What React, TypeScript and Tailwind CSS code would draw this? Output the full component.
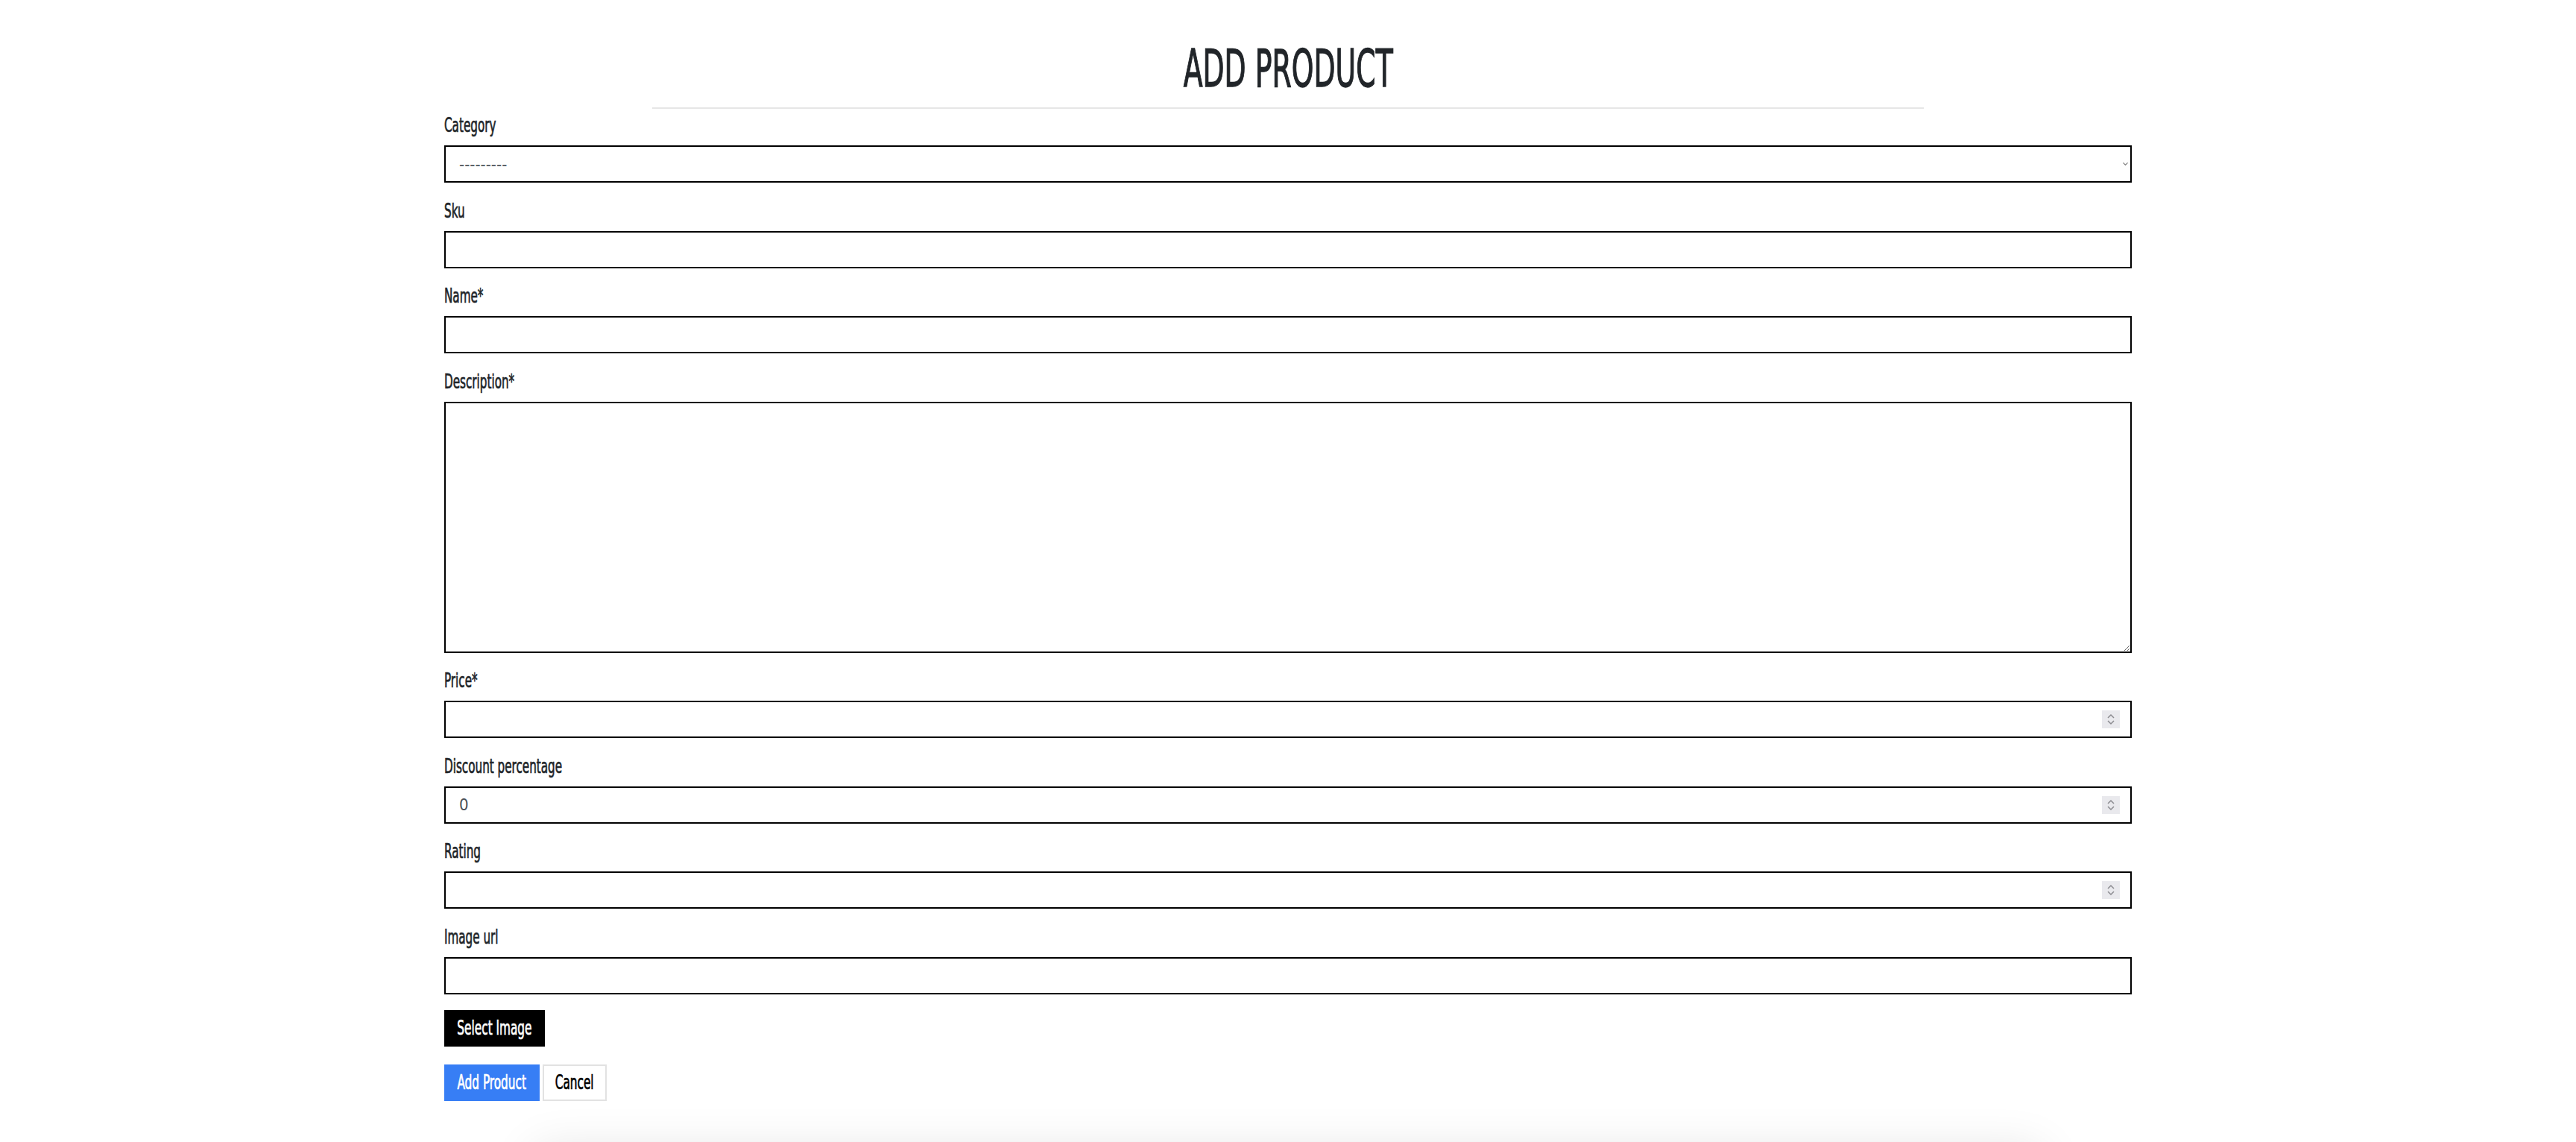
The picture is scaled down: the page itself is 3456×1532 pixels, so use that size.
import { ChevronDown } from 'lucide-react'

// Oswald is not installed: DejaVu Sans Condensed, squeezed sideways and thickened, stands in for it
const FIELD_LABEL = 'block text-[26px] leading-[28px] text-[#212529] mb-[13px] [-webkit-text-stroke:0.7px_#212529]'
const SQUEEZE = 'inline-block whitespace-nowrap origin-left scale-x-[0.65]'
const FIELD_BOX =
  'block w-full h-[50px] border-2 border-black bg-white px-[18px] text-[22px] text-[#495057] outline-none'

function Spinner() {
  return (
    <span className="absolute right-[16px] top-1/2 -translate-y-1/2 flex h-[24px] w-[24px] flex-col items-center justify-center bg-[#e9e9ed]">
      <svg width="10" height="7" viewBox="0 0 10 7" className="mb-[2px]">
        <path d="M1 6 L5 2 L9 6" fill="none" stroke="#8b8b90" strokeWidth="1.5" />
      </svg>
      <svg width="10" height="7" viewBox="0 0 10 7">
        <path d="M1 1 L5 5 L9 1" fill="none" stroke="#8b8b90" strokeWidth="1.5" />
      </svg>
    </span>
  )
}

function Label({ children }: { children: string }) {
  return (
    <label className={FIELD_LABEL}>
      <span className={SQUEEZE}>{children}</span>
    </label>
  )
}

function TextField({ label, value = '' }: { label: string; value?: string }) {
  return (
    <div className="mb-[23.5px]">
      <Label>{label}</Label>
      <input type="text" defaultValue={value} className={FIELD_BOX} />
    </div>
  )
}

function NumberField({ label, value = '' }: { label: string; value?: string }) {
  return (
    <div className="mb-[23.5px]">
      <Label>{label}</Label>
      <div className="relative">
        <input type="text" defaultValue={value} className={FIELD_BOX} />
        <Spinner />
      </div>
    </div>
  )
}

export default function App() {
  return (
    <div className="min-h-screen bg-white font-['DejaVu_Sans_Condensed','DejaVu_Sans',sans-serif] text-[#212529]">
      <div className="mx-auto w-[2264px]">
        <h1 className="flex justify-center pt-[57px] text-[70px] leading-none font-normal [-webkit-text-stroke:1.3px_#212529]">
          <span className="inline-block whitespace-nowrap origin-center scale-x-[0.6]">ADD PRODUCT</span>
        </h1>
        <hr className="mx-auto mt-[17px] w-[1706px] border-t-2 border-[#e6e6e6]" />

        <form className="mt-[8px]">
          {/* Category select */}
          <div className="mb-[23.5px]">
            <Label>Category</Label>
            <div className="relative">
              <select className={FIELD_BOX + ' appearance-none'} defaultValue="">
                <option value="">---------</option>
              </select>
              <ChevronDown
                size={11}
                strokeWidth={2.5}
                className="absolute right-[3px] top-1/2 -translate-y-1/2 text-[#7a7a7a]"
              />
            </div>
          </div>

          <TextField label="Sku" />
          <TextField label="Name*" />

          <div className="mb-[23.5px]">
            <Label>Description*</Label>
            <textarea className="block h-[337px] w-full border-2 border-black bg-white px-[18px] py-[10px] text-[22px] outline-none" />
          </div>

          <NumberField label="Price*" />
          <NumberField label="Discount percentage" value="0" />
          <NumberField label="Rating" />
          <TextField label="Image url" />

          <div className="-mt-[2px]">
            <button
              type="button"
              className="flex h-[49px] w-[135px] items-center justify-center bg-black text-[26px] text-white [-webkit-text-stroke:0.7px_#ffffff]"
            >
              <span className="inline-block whitespace-nowrap scale-x-[0.655]">Select Image</span>
            </button>
          </div>

          <div className="mt-[24px] flex gap-[4px]">
            <button
              type="button"
              className="flex h-[49px] w-[128px] items-center justify-center bg-[#377ef5] text-[26px] text-white [-webkit-text-stroke:0.7px_#ffffff]"
            >
              <span className="inline-block whitespace-nowrap scale-x-[0.655]">Add Product</span>
            </button>
            <button
              type="button"
              className="flex h-[49px] w-[86px] items-center justify-center border-2 border-[#e2e2e2] bg-white text-[26px] text-black [-webkit-text-stroke:0.7px_#000000]"
            >
              <span className="inline-block whitespace-nowrap scale-x-[0.655]">Cancel</span>
            </button>
          </div>
        </form>
      </div>

      {/* next card, only its shadow peeks in */}
      <div className="mx-auto mt-[68px] h-[300px] w-[2020px] bg-white shadow-[0_0_60px_rgba(0,0,0,0.12)]" />
    </div>
  )
}
